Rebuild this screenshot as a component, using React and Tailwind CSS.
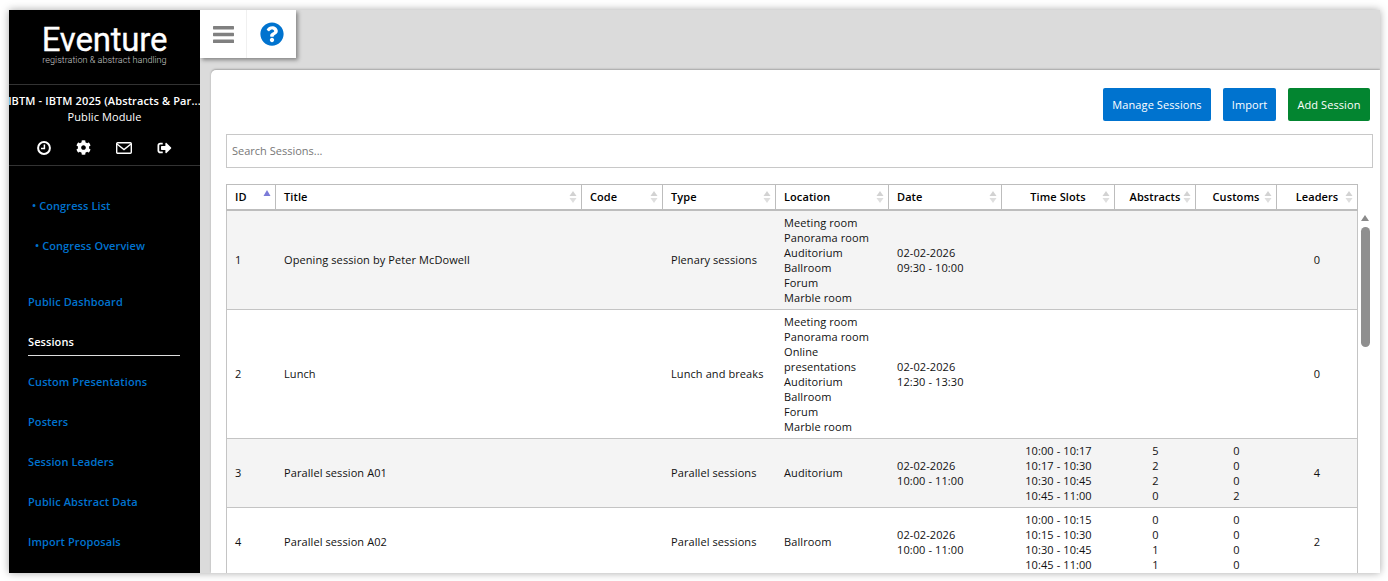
import React from 'react';
import { FaCog, FaQuestionCircle, FaSignOutAlt } from 'react-icons/fa';

const columns = [
  { label: 'ID', width: 'w-[50px]', sorted: true },
  { label: 'Title', width: 'w-[306px]' },
  { label: 'Code', width: 'w-[81px]' },
  { label: 'Type', width: 'w-[113px]' },
  { label: 'Location', width: 'w-[113px]' },
  { label: 'Date', width: 'w-[113px]' },
  { label: 'Time Slots', width: 'w-[113px]', center: true },
  { label: 'Abstracts', width: 'w-[81px]', center: true },
  { label: 'Customs', width: 'w-[81px]', center: true },
  { label: 'Leaders', width: 'w-[81px]', center: true },
];

const fullRooms = ['Meeting room', 'Panorama room', 'Auditorium', 'Ballroom', 'Forum', 'Marble room'];

const rows = [
  {
    id: 1, title: 'Opening session by Peter McDowell', type: 'Plenary sessions',
    location: fullRooms, date: ['02-02-2026', '09:30 - 10:00'], slots: [], abstracts: [], customs: [], leaders: 0,
  },
  {
    id: 2, title: 'Lunch', type: 'Lunch and breaks',
    location: ['Meeting room', 'Panorama room', 'Online presentations', 'Auditorium', 'Ballroom', 'Forum', 'Marble room'],
    date: ['02-02-2026', '12:30 - 13:30'], slots: [], abstracts: [], customs: [], leaders: 0,
  },
  {
    id: 3, title: 'Parallel session A01', type: 'Parallel sessions', location: ['Auditorium'],
    date: ['02-02-2026', '10:00 - 11:00'],
    slots: ['10:00 - 10:17', '10:17 - 10:30', '10:30 - 10:45', '10:45 - 11:00'],
    abstracts: [5, 2, 2, 0], customs: [0, 0, 0, 2], leaders: 4,
  },
  {
    id: 4, title: 'Parallel session A02', type: 'Parallel sessions', location: ['Ballroom'],
    date: ['02-02-2026', '10:00 - 11:00'],
    slots: ['10:00 - 10:15', '10:15 - 10:30', '10:30 - 10:45', '10:45 - 11:00'],
    abstracts: [0, 0, 1, 1], customs: [0, 0, 0, 0], leaders: 2,
  },
];

const navLinks = ['Public Dashboard', 'Sessions', 'Custom Presentations', 'Posters', 'Session Leaders', 'Public Abstract Data', 'Import Proposals'];

const Lines = ({ items }) => items.map((item, i) => <div key={i}>{item}</div>);

const SortArrows = ({ sorted }) => (
  <svg viewBox="0 0 8 14" className="absolute top-1/2 right-[4px] h-[14px] w-[8px] -translate-y-1/2">
    {sorted ? (
      <path d="M4 0 L7.5 6 L0.5 6 Z" fill="#7b7bd8" />
    ) : (
      <>
        <path d="M4 1 L7.5 6 L0.5 6 Z" fill="#d2d2d2" />
        <path d="M0.5 8 L7.5 8 L4 13 Z" fill="#dedede" />
      </>
    )}
  </svg>
);

const ClockIcon = () => (
  <svg viewBox="0 0 14 14" className="h-[14px] w-[14px]" fill="none" stroke="currentColor">
    <circle cx="7" cy="7" r="5.9" strokeWidth="2" />
    <path d="M7.4 3.4 V7.6 H4" strokeWidth="1.5" />
  </svg>
);

const MailIcon = () => (
  <svg viewBox="0 0 16 12" className="h-[12px] w-[16px]" fill="none" stroke="currentColor" strokeWidth="1.4">
    <rect x="0.7" y="0.7" width="14.6" height="10.6" rx="1" />
    <path d="M1 2 L8 7.6 L15 2" />
  </svg>
);

const Sidebar = () => (
  <aside className="flex w-[191px] shrink-0 flex-col bg-black text-white">
    <div className="flex h-[75px] flex-col items-center border-b border-[#333] pt-[14px]">
      <div className="font-['Roboto',sans-serif] text-[33px] leading-[31px] font-normal tracking-[-0.2px] [-webkit-text-stroke:0.3px_white]">Eventure</div>
      <div className="font-['Roboto',sans-serif] text-[9.1px] leading-[10px] font-light text-[#c8c8c8]">registration &amp; abstract handling</div>
    </div>
    <div className="h-[81px] border-b border-[#333] text-center">
      <div className="mt-[8px] flex justify-center overflow-hidden text-[11px] leading-[16px] font-semibold tracking-[0.12px] whitespace-nowrap">IBTM - IBTM 2025 (Abstracts &amp; Par...</div>
      <div className="text-[11px] leading-[16px] tracking-[0.09px]">Public Module</div>
      <div className="mt-[15px] flex h-[15px] items-center justify-center gap-[25px] pr-[1px]">
        <ClockIcon />
        <FaCog className="h-[15px] w-[15px]" />
        <MailIcon />
        <FaSignOutAlt className="h-[14px] w-[15px]" />
      </div>
    </div>
    <nav className="flex flex-col text-[11px] leading-[16px] font-semibold tracking-[0.09px] text-[#0073cf]">
      <a href="#" className="mt-[32px] ml-[23px]">• Congress List</a>
      <a href="#" className="mt-[24px] ml-[26px]">• Congress Overview</a>
      <div className="mt-[40px] flex flex-col gap-[24px] pr-[20px] pl-[19px]">
        {navLinks.map((link) => (
          <div key={link} className="relative">
            <a href="#" className={link === 'Sessions' ? 'text-white' : ''}>{link}</a>
            {link === 'Sessions' && <div className="absolute top-[21px] right-0 left-0 border-b border-[#ddd]" />}
          </div>
        ))}
      </div>
    </nav>
  </aside>
);

const SessionTable = () => (
  <table className="w-[1132px] table-fixed border-separate border-spacing-0 text-[11px] leading-[15px] tracking-[0.09px] text-[#111]">
    <thead>
      <tr>
        {columns.map((col, i) => (
          <th
            key={col.label}
            className={`${col.width} relative h-[27px] border-t border-r border-b-[2px] border-[#bdbdbd] px-2 pb-[2px] font-semibold text-black ${i === 0 ? 'border-l' : ''} ${col.center ? 'text-center' : 'text-left'}`}
          >
            {col.label}
            <SortArrows sorted={col.sorted} />
          </th>
        ))}
      </tr>
    </thead>
    <tbody>
      {rows.map((row, i) => {
        // single line cells sit a pixel above the middle of the row
        const base = 'border-b border-[#c4c4c4] px-2 align-middle';
        const cell = `${base} pt-[4px] pb-[4px]`;
        const single = `${base} pt-[3px] pb-[5px]`;
        return (
          <tr key={row.id} className={i % 2 === 0 ? 'bg-[#f4f4f4]' : 'bg-white'}>
            <td className={`${single} border-l`}>{row.id}</td>
            <td className={single}>{row.title}</td>
            <td className={single} />
            <td className={single}>{row.type}</td>
            <td className={row.location.length === 1 ? single : cell}><Lines items={row.location} /></td>
            <td className={cell}><Lines items={row.date} /></td>
            <td className={`${cell} text-center`}><Lines items={row.slots} /></td>
            <td className={`${cell} text-center`}><Lines items={row.abstracts} /></td>
            <td className={`${cell} text-center`}><Lines items={row.customs} /></td>
            <td className={`${single} border-r text-center`}>{row.leaders}</td>
          </tr>
        );
      })}
    </tbody>
  </table>
);

export default function App() {
  return (
    <div className="h-[581px] w-[1388px] overflow-hidden bg-white pt-[10px] pr-[8px] pb-[8px] pl-[9px] font-['Open_Sans',sans-serif]">
      <div className="flex h-full overflow-hidden shadow-[0_0_8px_rgba(0,0,0,0.35)]">
        <Sidebar />
        <main className="flex min-w-0 flex-1 flex-col bg-[#dbdbdb]">
          <div className="h-[60px] shrink-0">
            <div className="flex h-[48px] w-[96px] bg-white shadow-[2px_2px_4px_rgba(0,0,0,0.4)]">
              <div className="flex w-[47px] items-center justify-center border-r border-[#f0f0f0]">
                <svg viewBox="0 0 21 17" className="h-[17px] w-[21px]">
                  <rect y="0" width="21" height="3.4" rx="0.6" fill="#808080" />
                  <rect y="6.8" width="21" height="3.4" rx="0.6" fill="#808080" />
                  <rect y="13.6" width="21" height="3.4" rx="0.6" fill="#808080" />
                </svg>
              </div>
              <div className="flex flex-1 items-center justify-center text-[#0073cf]">
                <FaQuestionCircle className="h-[24px] w-[24px]" />
              </div>
            </div>
          </div>
          <div className="ml-[11px] min-h-0 flex-1 overflow-hidden rounded-tl-[5px] bg-white pt-[18px] pl-[15px] shadow-[0_-1px_2px_rgba(0,0,0,0.25)]">
            <div className="flex justify-end gap-[12px] pr-[10px] text-[11px] tracking-[0.09px] text-white">
              <button className="h-[33px] w-[108px] rounded-[2px] bg-[#0073cf] pt-[1px]">Manage Sessions</button>
              <button className="h-[33px] w-[53px] rounded-[2px] bg-[#0073cf] pt-[1px]">Import</button>
              <button className="h-[33px] w-[82px] rounded-[2px] bg-[#038530] pt-[1px]">Add Session</button>
            </div>
            <div className="mt-[13px] mr-[7px]">
              <input
                placeholder="Search Sessions..."
                className="h-[34px] w-full border border-[#c8c8c8] px-[5px] pb-[1px] text-[11px] outline-none placeholder:text-[#777]"
              />
            </div>
            <div className="mt-[16px] flex items-start">
              <SessionTable />
              <div className="mt-[30px] ml-[2px] flex w-[10px] flex-col items-center">
                <svg viewBox="0 0 10 8" className="h-[8px] w-[10px]"><path d="M5 1 L9 7 L1 7 Z" fill="#8a8a8a" /></svg>
                <div className="mt-[5px] h-[120px] w-[9px] rounded-[5px] bg-[#8f8f8f]" />
              </div>
            </div>
          </div>
        </main>
      </div>
    </div>
  );
}
